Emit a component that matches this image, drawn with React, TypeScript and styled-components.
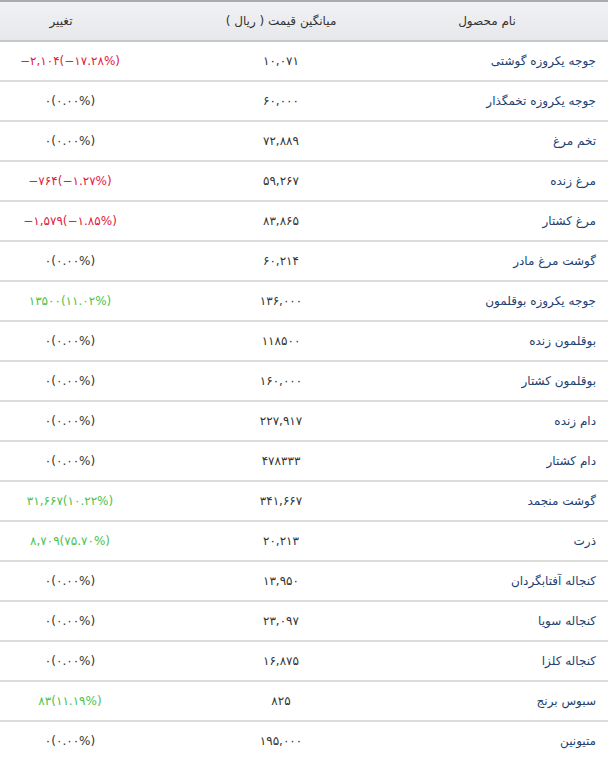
import React from "react";
import styled, { createGlobalStyle } from "styled-components";

const Global = createGlobalStyle`
  html, body { margin: 0; padding: 0; background: #ffffff; }
  body { font-family: Tahoma, "DejaVu Sans", "Noto Sans", sans-serif; }
`;

type Trend = "up" | "down" | "flat";

interface Item {
  name: string;
  price: string;
  change: string;
  trend: Trend;
}

const items: Item[] = [
  { name: "جوجه یکروزه گوشتی", price: "۱۰,۰۷۱", change: "−۲,۱۰۴(−۱۷.۲۸%)", trend: "down" },
  { name: "جوجه یکروزه تخمگذار", price: "۶۰,۰۰۰", change: "۰(۰.۰۰%)", trend: "flat" },
  { name: "تخم مرغ", price: "۷۲,۸۸۹", change: "۰(۰.۰۰%)", trend: "flat" },
  { name: "مرغ زنده", price: "۵۹,۲۶۷", change: "−۷۶۴(−۱.۲۷%)", trend: "down" },
  { name: "مرغ کشتار", price: "۸۳,۸۶۵", change: "−۱,۵۷۹(−۱.۸۵%)", trend: "down" },
  { name: "گوشت مرغ مادر", price: "۶۰,۲۱۴", change: "۰(۰.۰۰%)", trend: "flat" },
  { name: "جوجه یکروزه بوقلمون", price: "۱۳۶,۰۰۰", change: "۱۳۵۰۰(۱۱.۰۲%)", trend: "up" },
  { name: "بوقلمون زنده", price: "۱۱۸۵۰۰", change: "۰(۰.۰۰%)", trend: "flat" },
  { name: "بوقلمون کشتار", price: "۱۶۰,۰۰۰", change: "۰(۰.۰۰%)", trend: "flat" },
  { name: "دام زنده", price: "۲۲۷,۹۱۷", change: "۰(۰.۰۰%)", trend: "flat" },
  { name: "دام کشتار", price: "۴۷۸۳۳۳", change: "۰(۰.۰۰%)", trend: "flat" },
  { name: "گوشت منجمد", price: "۳۴۱,۶۶۷", change: "۳۱,۶۶۷(۱۰.۲۲%)", trend: "up" },
  { name: "ذرت", price: "۲۰,۲۱۳", change: "۸,۷۰۹(۷۵.۷۰%)", trend: "up" },
  { name: "کنجاله آفتابگردان", price: "۱۳,۹۵۰", change: "۰(۰.۰۰%)", trend: "flat" },
  { name: "کنجاله سویا", price: "۲۳,۰۹۷", change: "۰(۰.۰۰%)", trend: "flat" },
  { name: "کنجاله کلزا", price: "۱۶,۸۷۵", change: "۰(۰.۰۰%)", trend: "flat" },
  { name: "سبوس برنج", price: "۸۲۵", change: "۸۳(۱۱.۱۹%)", trend: "up" },
  { name: "متیونین", price: "۱۹۵,۰۰۰", change: "۰(۰.۰۰%)", trend: "flat" },
];

const Table = styled.div`
  direction: rtl;
  width: 608px;
  font-size: 12px;
  border-top: 2px solid #a9abae;
`;

const HeaderRow = styled.div`
  display: grid;
  grid-template-columns: 242px 170px 1fr;
  height: 38px;
  align-items: center;
  background: linear-gradient(#f1f1f4, #e7e8eb);
  border-bottom: 2px solid #c6c7c9;
  color: #333333;
`;

const HeadCell = styled.div<{ $padRight?: number }>`
  text-align: center;
  padding-right: ${(p) => p.$padRight ?? 0}px;
`;

const Row = styled.div`
  display: grid;
  grid-template-columns: 242px 170px 1fr;
  height: 38px;
  align-items: center;
  border-bottom: 2px solid #dcdcdc;
`;

const NameCell = styled.div`
  text-align: right;
  padding-right: 12px;
  color: #1d3f72;
`;

const PriceCell = styled.div`
  text-align: center;
  color: #333333;
  letter-spacing: 0.3px;
`;

const ChangeCell = styled.div<{ $trend: Trend }>`
  text-align: center;
  padding-right: 56px;
  letter-spacing: 0.7px;
  color: ${(p) =>
    p.$trend === "down" ? "#e0203f" : p.$trend === "up" ? "#4cc24c" : "#333333"};
`;

const Ltr = styled.span`
  direction: ltr;
  unicode-bidi: bidi-override;
`;

export default function App() {
  return (
    <>
      <Global />
      <Table>
        <HeaderRow>
          <HeadCell>نام محصول</HeadCell>
          <HeadCell>میانگین قیمت ( ریال )</HeadCell>
          <HeadCell $padRight={74}>تغییر</HeadCell>
        </HeaderRow>
        {items.map((it) => (
          <Row key={it.name}>
            <NameCell>{it.name}</NameCell>
            <PriceCell>
              <Ltr>{it.price}</Ltr>
            </PriceCell>
            <ChangeCell $trend={it.trend}>
              <Ltr>{it.change}</Ltr>
            </ChangeCell>
          </Row>
        ))}
      </Table>
    </>
  );
}
